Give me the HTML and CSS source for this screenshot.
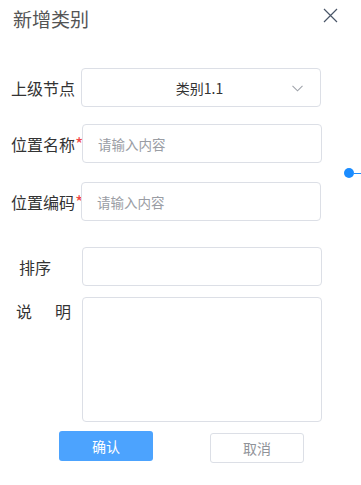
FILE: index.html
```html
<!DOCTYPE html>
<html lang="zh-CN">
<head>
    <meta charset="UTF-8">
    <meta name="viewport" content="width=device-width, initial-scale=1.0">
    <title>新增类别</title>
    <link rel="stylesheet" href="styles.css">
</head>
<body>
    <div class="dialog">
        <div class="dialog-header">
            <span class="dialog-title">新增类别</span>
            <button type="button" class="close-btn" aria-label="关闭">
                <svg width="15" height="15" viewBox="0 0 15 15">
                    <path d="M1 1 L14 14 M14 1 L1 14" stroke="#4a5668" stroke-width="1.2" fill="none"/>
                </svg>
            </button>
        </div>

        <form class="form">
            <div class="form-item item-parent">
                <label class="form-label">上级节点</label>
                <div class="select">
                    <span class="select-value">类别1.1</span>
                    <svg class="select-arrow" width="11" height="7" viewBox="0 0 11 7">
                        <path d="M0.5 0.8 L5.5 5.8 L10.5 0.8" stroke="#a0a4ab" stroke-width="1.1" fill="none"/>
                    </svg>
                </div>
            </div>
            <div class="form-item item-name">
                <label class="form-label">位置名称<span class="required">*</span></label>
                <input class="input" type="text" placeholder="请输入内容">
            </div>
            <div class="form-item item-code">
                <label class="form-label">位置编码<span class="required">*</span></label>
                <input class="input" type="text" placeholder="请输入内容">
            </div>
            <div class="form-item item-sort">
                <label class="form-label label-indent">排序</label>
                <input class="input" type="text">
            </div>
            <div class="form-item item-desc">
                <label class="form-label label-spread"><span>说</span><span>明</span></label>
                <textarea class="textarea"></textarea>
            </div>
        </form>

        <div class="dialog-footer">
            <button type="button" class="btn btn-primary">确认</button>
            <button type="button" class="btn btn-default">取消</button>
        </div>
    </div>

    <div class="slider-handle"></div>
</body>
</html>
```

FILE: styles.css
```css
* {
    box-sizing: border-box;
    margin: 0;
    padding: 0;
    font-family: "Noto Sans CJK SC", "Noto Sans", sans-serif;
}

body {
    background-color: #fff;
    width: 361px;
    height: 485px;
    overflow: hidden;
    position: relative;
}

.dialog {
    width: 361px;
}

.dialog-header {
    display: flex;
    justify-content: space-between;
    align-items: flex-start;
    padding: 6px 23px 0 13px;
}

.dialog-title {
    font-size: 19px;
    line-height: 25px;
    color: #555;
}

.close-btn {
    border: none;
    background: none;
    width: 15px;
    height: 15px;
    margin-top: 2px;
    cursor: pointer;
}

.close-btn svg {
    display: block;
}

.form {
    margin-top: 37px;
    padding-left: 11px;
}

.form-item {
    display: flex;
    align-items: center;
}

.form-label {
    width: 70px;
    flex-shrink: 0;
    font-size: 16px;
    line-height: 20px;
    color: #333;
    white-space: nowrap;
}

.required {
    color: #f04848;
    font-size: 18px;
    line-height: 1;
    vertical-align: 0;
}

.label-indent {
    padding-left: 8px;
}

.label-spread {
    display: flex;
    justify-content: space-between;
    padding: 4px 10px 0 5px;
}

.select,
.input,
.textarea {
    width: 240px;
    height: 39px;
    border: 1px solid #dcdfe6;
    border-radius: 4px;
    background-color: #fff;
}

.select {
    position: relative;
    display: flex;
    align-items: center;
    justify-content: center;
}

.select-value {
    font-size: 14px;
    color: #333;
    margin-right: 3px;
}

.select-arrow {
    position: absolute;
    right: 17px;
    top: 16px;
}

.input {
    padding: 0 15px;
    font-size: 13.5px;
    color: #333;
    outline: none;
}

.input::placeholder {
    color: #9a9da4;
}

.item-name {
    margin-top: 17px;
}

.item-name .input,
.item-sort .input,
.item-desc .textarea {
    margin-left: 1px;
}

.item-code {
    margin-top: 19px;
}

.item-sort {
    margin-top: 26px;
}

.item-desc {
    margin-top: 11px;
    align-items: flex-start;
}

.textarea {
    height: 125px;
    resize: none;
    outline: none;
}

.dialog-footer {
    display: flex;
    align-items: flex-start;
    gap: 57px;
    padding-left: 59px;
    margin-top: 9px;
}

.btn {
    width: 94px;
    height: 30px;
    font-size: 14px;
    border-radius: 3px;
    cursor: pointer;
}

.btn-primary {
    background-color: #4ca3fe;
    border: none;
    color: #fff;
}

.btn-default {
    margin-top: 2px;
    background-color: #fff;
    border: 1px solid #dcdfe6;
    color: #909399;
}

.slider-handle {
    position: absolute;
    left: 344px;
    top: 168px;
    width: 10px;
    height: 10px;
    border-radius: 50%;
    background-color: #1a8cff;
}

.slider-handle::after {
    content: "";
    position: absolute;
    left: 10px;
    top: 4.5px;
    width: 8px;
    height: 1px;
    background-color: #1a8cff;
}
```
